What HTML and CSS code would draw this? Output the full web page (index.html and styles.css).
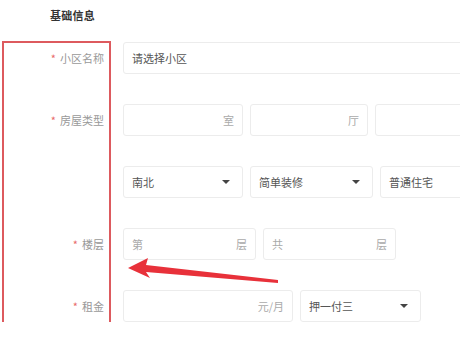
FILE: index.html
```html
<!doctype html>
<html lang="zh-CN">
  <head>
    <meta charset="utf-8" />
    <title>基础信息</title>
    <link rel="stylesheet" href="styles.css">
  </head>
  <body>
    <div class="page">
      <div class="section-title">基础信息</div>

      <div class="form">
        <div class="row">
          <label class="label"><span class="req">*</span>小区名称</label>
          <div class="fields">
            <div class="field wide"><span class="value">请选择小区</span></div>
          </div>
        </div>

        <div class="row">
          <label class="label"><span class="req">*</span>房屋类型</label>
          <div class="fields">
            <div class="field room"><span class="unit">室</span></div>
            <div class="field hall"><span class="unit">厅</span></div>
            <div class="field rest"></div>
          </div>
        </div>

        <div class="row">
          <label class="label"></label>
          <div class="fields">
            <div class="field room"><span class="value">南北</span><span class="caret"></span></div>
            <div class="field deco"><span class="value">简单装修</span><span class="caret"></span></div>
            <div class="field rest"><span class="value">普通住宅</span></div>
          </div>
        </div>

        <div class="row">
          <label class="label"><span class="req">*</span>楼层</label>
          <div class="fields">
            <div class="field floor"><span class="hint">第</span><span class="unit">层</span></div>
            <div class="field floor"><span class="hint">共</span><span class="unit">层</span></div>
          </div>
        </div>

        <div class="row">
          <label class="label"><span class="req">*</span>租金</label>
          <div class="fields">
            <div class="field rent"><span class="unit">元/月</span></div>
            <div class="field pay"><span class="value">押一付三</span><span class="caret"></span></div>
          </div>
        </div>
      </div>

      <!-- annotation: red frame around labels + arrow -->
      <div class="mark-box"></div>
      <svg class="mark-arrow" width="160" height="40" viewBox="0 0 160 40">
        <polygon points="0,10 20,0 18,7 150,22 150,25 18,14 22,20" fill="#e8313a" />
      </svg>
    </div>
  </body>
</html>
```

FILE: styles.css
```css
* {
  box-sizing: border-box;
}

html,
body {
  margin: 0;
  background: #fff;
}

body {
  font-family: 'Noto Sans CJK SC', 'Noto Sans', sans-serif;
  color: #555;
}

.page {
  position: relative;
  width: 460px;
  height: 322px;
  overflow: hidden;
}

.section-title {
  height: 42px;
  padding: 7px 0 0 50px;
  font-size: 11px;
  font-weight: 700;
  color: #333;
  letter-spacing: 0.02em;
}

.form {
  display: flex;
  flex-direction: column;
  gap: 30px;
}

.row {
  display: flex;
  align-items: center;
  height: 32px;
}

.label {
  width: 104px;
  flex-shrink: 0;
  text-align: right;
  font-size: 11px;
  color: #999;
}

.req {
  color: #e86a6a;
  margin-right: 4px;
}

.fields {
  display: flex;
  gap: 7px;
  margin-left: 19px;
  flex: 1;
  height: 100%;
}

.field {
  display: flex;
  align-items: center;
  height: 100%;
  padding: 0 8px;
  border: 1px solid #ececec;
  border-radius: 3px;
  font-size: 11px;
  background: #fff;
}

.wide {
  width: 360px;
}

.room {
  width: 120px;
}

.hall {
  width: 118px;
}

.deco {
  width: 123px;
}

.rest {
  width: 120px;
}

.floor {
  width: 133px;
}

.rent {
  width: 170px;
}

.pay {
  width: 121px;
}

.value {
  color: #555;
}

.hint {
  color: #aaa;
}

.unit {
  margin-left: auto;
  color: #aaa;
}

.caret {
  margin-left: auto;
  margin-right: 4px;
  width: 0;
  height: 0;
  border-left: 4px solid transparent;
  border-right: 4px solid transparent;
  border-top: 4px solid #444;
}

.mark-box {
  position: absolute;
  left: 2px;
  top: 41px;
  width: 109px;
  height: 300px;
  border: 2px solid #dd5a5e;
}

.mark-arrow {
  position: absolute;
  left: 128px;
  top: 258px;
}
```
